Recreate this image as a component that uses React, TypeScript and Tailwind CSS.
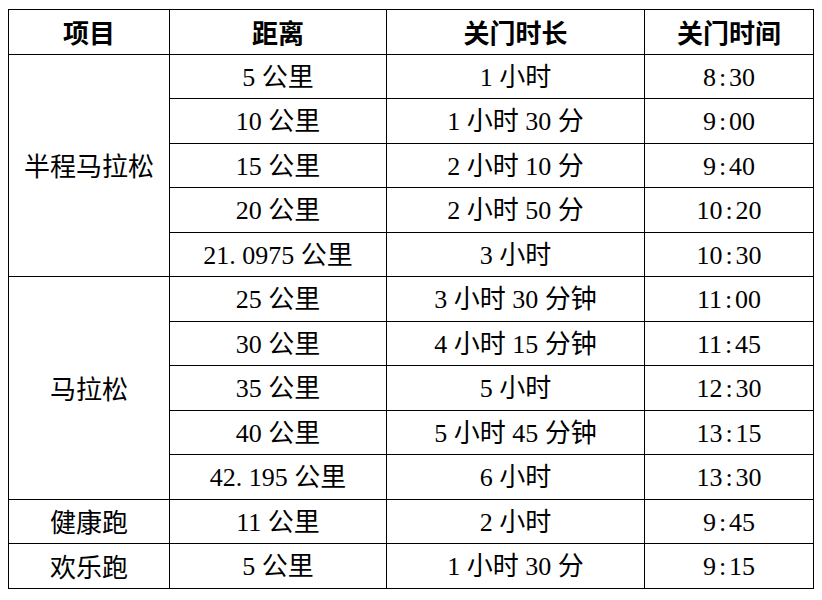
import React from "react";

type Row = { dist: string; dur: string; time: string };

const half: Row[] = [
  { dist: "5 公里", dur: "1 小时", time: "8:30" },
  { dist: "10 公里", dur: "1 小时 30 分", time: "9:00" },
  { dist: "15 公里", dur: "2 小时 10 分", time: "9:40" },
  { dist: "20 公里", dur: "2 小时 50 分", time: "10:20" },
  { dist: "21.0975 公里", dur: "3 小时", time: "10:30" },
];
const full: Row[] = [
  { dist: "25 公里", dur: "3 小时 30 分钟", time: "11:00" },
  { dist: "30 公里", dur: "4 小时 15 分钟", time: "11:45" },
  { dist: "35 公里", dur: "5 小时", time: "12:30" },
  { dist: "40 公里", dur: "5 小时 45 分钟", time: "13:15" },
  { dist: "42.195 公里", dur: "6 小时", time: "13:30" },
];

// Mixed text: ASCII digits and spaces in a serif face, CJK in the CJK face
function T({ s }: { s: string }) {
  const parts: React.ReactNode[] = [];
  let i = 0;
  for (const ch of s) {
    if (ch === "." || ch === ":") {
      parts.push(
        <span
          key={i++}
          className={
            "inline-block w-[0.5em] font-['Liberation_Serif',serif] " +
            (ch === "." ? "text-left" : "text-center")
          }
        >
          {ch}
        </span>
      );
    } else if (/[0-9 ]/.test(ch)) {
      parts.push(
        <span key={i++} className="font-['Liberation_Serif',serif] whitespace-pre">
          {ch}
        </span>
      );
    } else {
      parts.push(<span key={i++}>{ch}</span>);
    }
  }
  return <>{parts}</>;
}

const cell =
  "border border-black text-center align-middle h-[44.5px] p-0 leading-none";

export default function App() {
  return (
    <div className="bg-white w-[822px] h-[600px] pt-[9px] pl-[8px] font-['Noto_Sans_CJK_SC',sans-serif] text-black text-[26px]">
      <table className="border-collapse table-fixed w-[805px]">
        <colgroup>
          <col className="w-[161px]" />
          <col className="w-[217px]" />
          <col className="w-[258px]" />
          <col className="w-[169px]" />
        </colgroup>
        <thead>
          <tr>
            <th className={cell + " font-bold"}>项目</th>
            <th className={cell + " font-bold"}>距离</th>
            <th className={cell + " font-bold"}>关门时长</th>
            <th className={cell + " font-bold"}>关门时间</th>
          </tr>
        </thead>
        <tbody>
          {half.map((r, idx) => (
            <tr key={"h" + idx}>
              {idx === 0 && (
                <td rowSpan={5} className={cell}>
                  半程马拉松
                </td>
              )}
              <td className={cell}>
                <T s={r.dist} />
              </td>
              <td className={cell}>
                <T s={r.dur} />
              </td>
              <td className={cell}>
                <T s={r.time} />
              </td>
            </tr>
          ))}
          {full.map((r, idx) => (
            <tr key={"f" + idx}>
              {idx === 0 && (
                <td rowSpan={5} className={cell}>
                  马拉松
                </td>
              )}
              <td className={cell}>
                <T s={r.dist} />
              </td>
              <td className={cell}>
                <T s={r.dur} />
              </td>
              <td className={cell}>
                <T s={r.time} />
              </td>
            </tr>
          ))}
          <tr>
            <td className={cell}>健康跑</td>
            <td className={cell}>
              <T s="11 公里" />
            </td>
            <td className={cell}>
              <T s="2 小时" />
            </td>
            <td className={cell}>
              <T s="9:45" />
            </td>
          </tr>
          <tr>
            <td className={cell}>欢乐跑</td>
            <td className={cell}>
              <T s="5 公里" />
            </td>
            <td className={cell}>
              <T s="1 小时 30 分" />
            </td>
            <td className={cell}>
              <T s="9:15" />
            </td>
          </tr>
        </tbody>
      </table>
    </div>
  );
}
